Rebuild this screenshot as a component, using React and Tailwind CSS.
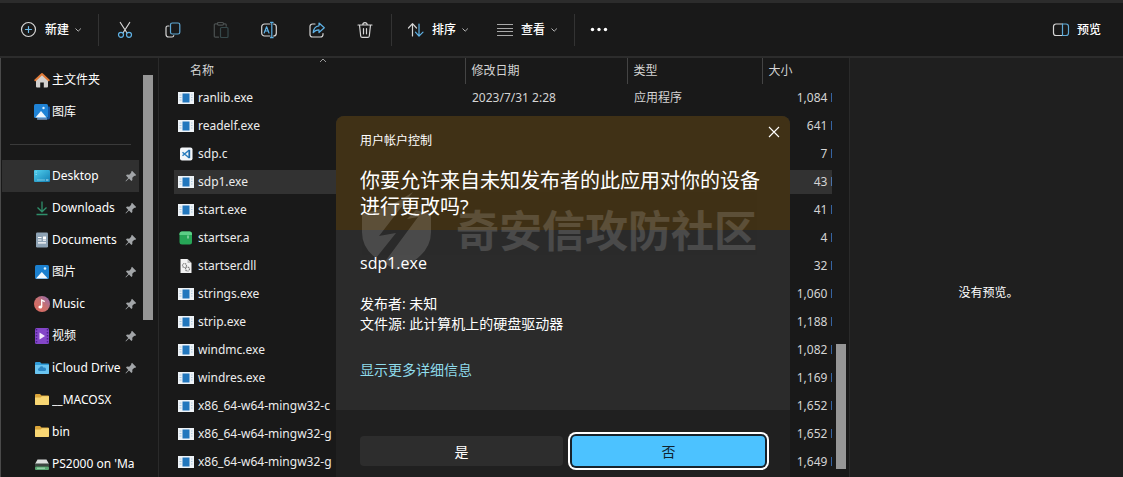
import React from 'react';

const QUICK_LINKS = [
  { label: '主文件夹', icon: HomeIcon },
  { label: '图库', icon: GalleryIcon },
];

const PLACES = [
  { label: 'Desktop', icon: DesktopIcon, pinned: true, active: true },
  { label: 'Downloads', icon: DownloadIcon, pinned: true },
  { label: 'Documents', icon: DocumentIcon, pinned: true },
  { label: '图片', icon: PictureIcon, pinned: true },
  { label: 'Music', icon: MusicIcon, pinned: true },
  { label: '视频', icon: VideoIcon, pinned: true },
  { label: 'iCloud Drive', icon: CloudFolderIcon, pinned: true },
  { label: '__MACOSX', icon: FolderIcon },
  { label: 'bin', icon: FolderIcon },
  { label: "PS2000 on 'Ma", icon: DriveIcon },
];

const FILES = [
  { name: 'ranlib.exe', date: '2023/7/31 2:28', type: '应用程序', size: '1,084' },
  { name: 'readelf.exe', size: '641' },
  { name: 'sdp.c', icon: CodeFileIcon, size: '7' },
  { name: 'sdp1.exe', size: '43', selected: true },
  { name: 'start.exe', size: '41' },
  { name: 'startser.a', icon: ArchiveFileIcon, size: '4' },
  { name: 'startser.dll', icon: DllFileIcon, size: '32' },
  { name: 'strings.exe', size: '1,060' },
  { name: 'strip.exe', size: '1,188' },
  { name: 'windmc.exe', size: '1,082' },
  { name: 'windres.exe', size: '1,169' },
  { name: 'x86_64-w64-mingw32-c', size: '1,652' },
  { name: 'x86_64-w64-mingw32-g', size: '1,652' },
  { name: 'x86_64-w64-mingw32-g', size: '1,649' },
];

/* ---------- toolbar icons ---------- */

function ToolIcon({ children }) {
  return (
    <svg viewBox="0 0 18 18" className="w-[18px] h-[18px] shrink-0" fill="none" stroke="#d6d6d6" strokeWidth="1.2" strokeLinecap="round" strokeLinejoin="round" aria-hidden="true">
      {children}
    </svg>
  );
}

function NewIcon() {
  return (
    <ToolIcon>
      <circle cx="8.500" cy="8.500" r="7" />
      <path d="M8.500 5.500v6M5.500 8.500h6" stroke="#6fb9e6" />
    </ToolIcon>
  );
}

function CutIcon() {
  return (
    <ToolIcon>
      <path d="M4.3 1.5l6.6 10.3M13.7 1.5L7.1 11.8" />
      <circle cx="5" cy="13.8" r="2.5" stroke="#5fb2e6" />
      <circle cx="13" cy="13.8" r="2.5" stroke="#5fb2e6" />
    </ToolIcon>
  );
}

function CopyIcon() {
  return (
    <ToolIcon>
      <path d="M5 5H3.8A1.8 1.8 0 0 0 2 6.800v6.400A2.800 2.800 0 0 0 4.800 16H8a1.800 1.800 0 0 0 1.800-1.500" />
      <rect x="6.500" y="2" width="9.300" height="11" rx="1.800" stroke="#5fa9d6" />
    </ToolIcon>
  );
}

function PasteIcon() {
  return (
    <ToolIcon>
      <g stroke="#4b5050">
        <path d="M5.500 2.800H3.300a1 1 0 0 0-1 1v11.400a1 1 0 0 0 1 1h3.200M11.500 2.800h1.700a1 1 0 0 1 1 1v1.400" />
        <rect x="5.500" y="1.500" width="6" height="2.600" rx="1" />
        <rect x="8.500" y="6.500" width="7.500" height="10" rx="1" stroke="#36494b" />
      </g>
    </ToolIcon>
  );
}

function RenameIcon() {
  return (
    <ToolIcon>
      <path d="M10 3H4.500A2.800 2.800 0 0 0 1.700 5.800v6.400A2.800 2.800 0 0 0 4.500 15H10M13.600 3a2.800 2.800 0 0 1 2.700 2.800v6.400a2.800 2.800 0 0 1-2.700 2.800" />
      <path d="M10.500 1.300h2.600M10.500 16.700h2.600M11.800 1.300v15.400M4.200 12l2.400-6.300L9 12M5 10h3.200" stroke="#5fb2e6" />
    </ToolIcon>
  );
}

function ShareIcon() {
  return (
    <ToolIcon>
      <path d="M7 3H4.500A2.500 2.500 0 0 0 2 5.500v8A2.500 2.500 0 0 0 4.500 16h8a2.500 2.500 0 0 0 2.500-2.500v-1" />
      <path d="M11 2l5.300 4.800L11 11.500V8.800c-2.700 0-4.400.9-5.800 2.900.3-3.700 2.300-6.500 5.800-6.900z" stroke="#5fb2e6" />
    </ToolIcon>
  );
}

function TrashIcon() {
  return (
    <ToolIcon>
      <path d="M2 4h14M6.800 3.800a2.200 2.200 0 0 1 4.400 0M3.500 4l1.200 11a1.600 1.600 0 0 0 1.600 1.400h5.400a1.600 1.600 0 0 0 1.600-1.400l1.200-11M7.500 7.500v5.300M10.500 7.500v5.300" />
    </ToolIcon>
  );
}

function SortIcon() {
  return (
    <ToolIcon>
      <path d="M5.500 15V3M1.500 7l4-4.300L9.500 7" />
      <path d="M12 3v12M8.500 11.200l3.500 4 4-4" stroke="#5fb2e6" />
    </ToolIcon>
  );
}

function ViewIcon() {
  return (
    <ToolIcon>
      <path d="M1 3.500h16M1 7.500h16M1 10.500h16M1 14.500h16" stroke="#a8a8a8" strokeLinecap="butt" />
    </ToolIcon>
  );
}

function PreviewIcon() {
  return (
    <ToolIcon>
      <path d="M10.500 3H4a2.500 2.500 0 0 0-2.500 2.500v6.500A2.500 2.500 0 0 0 4 14.500h6.500" />
      <path d="M10.500 3H14a2.500 2.500 0 0 1 2.500 2.500v6.500a2.500 2.500 0 0 1-2.500 2.500h-3.500z" stroke="#5fa9d6" />
    </ToolIcon>
  );
}

function Chevron() {
  return (
    <svg viewBox="0 0 8 8" className="w-2 h-2 shrink-0" fill="none" stroke="#b5b5b5" aria-hidden="true">
      <path d="M.5 2.500l2.700 2.700 2.700-2.700" />
    </svg>
  );
}

/* ---------- sidebar icons ---------- */

function PlaceIcon({ children }) {
  return (
    <svg viewBox="0 0 16 16" className="w-4 h-4 shrink-0" aria-hidden="true">
      {children}
    </svg>
  );
}

function HomeIcon() {
  return (
    <PlaceIcon>
      <path d="M2 7.500L8 2l6 5.500V14.500a1 1 0 0 1-1 1H9.800V10.500H6.200v5H3a1 1 0 0 1-1-1z" fill="#d3d0ce" />
      <path d="M1.300 8.300L8 2l6.700 6.300" fill="none" stroke="#e07b39" strokeWidth="2" strokeLinecap="round" strokeLinejoin="round" />
    </PlaceIcon>
  );
}

function GalleryIcon() {
  return (
    <PlaceIcon>
      <path d="M14 2.500h1.200a.8.8 0 0 1 .8.800v10.200a2 2 0 0 1-2 2H3.500V14H14z" fill="#1656a3" />
      <rect width="14" height="14" rx="1.500" fill="#1f83d6" />
      <path d="M1.500 13.500L7 7l5.500 6.500z" fill="#eef6fd" />
      <circle cx="9.500" cy="4" r="1.200" fill="#d7ecfb" />
      <path d="M3 15h10" stroke="#9fb9d0" />
    </PlaceIcon>
  );
}

function DesktopIcon() {
  return (
    <PlaceIcon>
      <defs>
        <linearGradient id="desktop" x1="0" x2="1" y1="0" y2="1">
          <stop stopColor="#52d0ee" />
          <stop offset="1" stopColor="#127fb4" />
        </linearGradient>
      </defs>
      <rect y="2" width="16" height="12" rx="1" fill="url(#desktop)" />
      <path d="M1.500 4h1.500M1.500 6.500h1.500M3 12h8" stroke="#b7effb" strokeWidth=".8" opacity=".7" />
      <path d="M12 12h2.500" stroke="#e3f7fd" strokeWidth=".8" />
    </PlaceIcon>
  );
}

function DownloadIcon() {
  return (
    <PlaceIcon>
      <path d="M8 1.500v10M3.500 7.500L8 11.800l4.500-4.300M2.500 14.500h11" fill="none" stroke="#2f8f6b" strokeWidth="1.300" />
    </PlaceIcon>
  );
}

function DocumentIcon() {
  return (
    <PlaceIcon>
      <rect x="2" y=".5" width="12" height="15" rx="1.200" fill="#8ea3b5" />
      <path d="M4 5.500h3.500M4 8h3.500M4 10.800h8M9 8.200h3" stroke="#fff" strokeWidth="1.200" />
      <rect x="9" y="4.500" width="3" height="2.500" fill="#fff" />
    </PlaceIcon>
  );
}

function PictureIcon() {
  return (
    <PlaceIcon>
      <rect x="1" y="1" width="14" height="14" rx="1.500" fill="#1b80cf" />
      <path d="M2 14.500L7.800 8l6 6.500z" fill="#f1f8fe" />
      <circle cx="11" cy="4.500" r="1.300" fill="#d9eefc" />
    </PlaceIcon>
  );
}

function MusicIcon() {
  return (
    <PlaceIcon>
      <defs>
        <linearGradient id="music" x1="0" x2="1" y1="1" y2="0">
          <stop stopColor="#e2685d" />
          <stop offset=".5" stopColor="#c9706e" />
          <stop offset="1" stopColor="#8f6bb5" />
        </linearGradient>
      </defs>
      <circle cx="8" cy="8" r="8" fill="url(#music)" />
      <ellipse cx="6.300" cy="11" rx="1.900" ry="1.600" fill="#fff" />
      <path d="M7.700 11V4l3 1.600" fill="none" stroke="#fff" strokeWidth="1.300" />
    </PlaceIcon>
  );
}

function VideoIcon() {
  return (
    <PlaceIcon>
      <rect x="1" width="14" height="16" rx="1.500" fill="#8446c8" />
      <path d="M2.500 1v14M13.500 1v14" stroke="#4d2290" strokeWidth="1.500" strokeDasharray="1.500 1.500" />
      <path d="M5.500 4.500L11 8l-5.500 3.500z" fill="#f4e9fd" />
    </PlaceIcon>
  );
}

function CloudFolderIcon() {
  return (
    <PlaceIcon>
      <path d="M1 3a1 1 0 0 1 1-1h4l1.500 1.500H14a1 1 0 0 1 1 1V13a1 1 0 0 1-1 1H2a1 1 0 0 1-1-1z" fill="#2f9bd8" />
      <path d="M1 5h14v8a1 1 0 0 1-1 1H2a1 1 0 0 1-1-1z" fill="#6ac4f0" />
      <path d="M5 11a1.600 1.600 0 0 1 .3-3.100 2.300 2.300 0 0 1 4.300-.2A1.700 1.700 0 0 1 11 11z" fill="#2c86c4" />
    </PlaceIcon>
  );
}

function FolderIcon() {
  return (
    <PlaceIcon>
      <path d="M1 3a1 1 0 0 1 1-1h4l1.500 1.500H14a1 1 0 0 1 1 1V12a1 1 0 0 1-1 1H2a1 1 0 0 1-1-1z" fill="#dba53a" />
      <path d="M1 5.500h5.500L8 4.200h7V12a1 1 0 0 1-1 1H2a1 1 0 0 1-1-1z" fill="#f8d673" />
    </PlaceIcon>
  );
}

function DriveIcon() {
  return (
    <PlaceIcon>
      <path d="M3.500 3.500h9L15 8H1z" fill="#dcdedd" />
      <rect x="1" y="7.500" width="14" height="3" fill="#3c4641" />
      <rect x="1" y="10.500" width="14" height="3.500" rx="1" fill="#5aa873" />
      <path d="M3 12.200h8" stroke="#c5ead0" strokeWidth=".8" />
    </PlaceIcon>
  );
}

function PinIcon() {
  return (
    <svg viewBox="0 0 12 12" className="w-3 h-3 shrink-0" aria-hidden="true">
      <path d="M7 .8l4.200 4.200-1.200.9-.7-.1-2 2 .1 2.200-1 1L4 8.600.9 11.400l-.4-.4L3.300 8 1 5.600l1-1 2.200.1 2-2-.1-.8z" fill="#a2a5a8" />
    </svg>
  );
}

/* ---------- file icons ---------- */

function ExeFileIcon() {
  return (
    <PlaceIcon>
      <rect y="2" width="16" height="12" fill="#eef3f7" />
      <rect x="4.500" y="3.500" width="7" height="9" fill="#2277bd" />
      <path d="M1.500 5h2M1.500 7.500h2M1.500 10h2M13 5h1.500M13 7.500h1.500M13 10h1.500" stroke="#9cc0da" strokeWidth=".8" />
    </PlaceIcon>
  );
}

function CodeFileIcon() {
  return (
    <PlaceIcon>
      <rect x="2" y="1.500" width="12.500" height="13" rx="2" fill="#f3f6f9" />
      <path d="M11 4.200L4.500 9.800M11 11.800L4.500 6.200" fill="none" stroke="#2b7fc0" strokeWidth="1.500" />
      <path d="M11.300 3.800v8.400" stroke="#1f6cab" strokeWidth="1.800" />
    </PlaceIcon>
  );
}

function ArchiveFileIcon() {
  return (
    <PlaceIcon>
      <rect x="1.500" y="1.500" width="12.500" height="13" rx="2.500" fill="#27a657" />
      <path d="M1.500 5V4A2.500 2.500 0 0 1 4 1.500h7.500A2.500 2.500 0 0 1 14 4v1z" fill="#5ccf86" />
      <path d="M10 5.500v3" stroke="#c8f3d6" />
    </PlaceIcon>
  );
}

function DllFileIcon() {
  return (
    <PlaceIcon>
      <path d="M2.500 1h7L13.500 5v10h-11z" fill="#f2f2f2" />
      <path d="M9.500 1v4h4z" fill="#b9b9b9" />
      <circle cx="6.500" cy="7.500" r="2" fill="none" stroke="#7d7d7d" strokeWidth="1.200" strokeDasharray="1.200 .6" />
      <circle cx="9.500" cy="11" r="2" fill="none" stroke="#7d7d7d" strokeWidth="1.200" strokeDasharray="1.200 .6" />
    </PlaceIcon>
  );
}

/* ---------- sections ---------- */

function IconButton({ label, children, disabled }) {
  return (
    <button type="button" aria-label={label} disabled={disabled} className="flex w-12 h-10 items-center justify-center">
      {children}
    </button>
  );
}

function MenuButton({ label, icon: Icon }) {
  return (
    <button type="button" className="flex items-center gap-[7px]">
      <Icon />
      <span className="flex items-center gap-1.5">{label} <Chevron /></span>
    </button>
  );
}

function Divider() {
  return <div className="h-8 w-px bg-[#333]" />;
}

function Toolbar() {
  return (
    <header className="flex h-[58px] shrink-0 items-center border-t-3 border-b-2 border-[#2c2c2c] pr-[22px] pl-5 text-[12px] font-medium text-white">
      <div className="flex items-center gap-[15px]">
        <MenuButton label="新建" icon={NewIcon} />
        <Divider />
      </div>
      <div className="flex items-center px-0.5">
        <IconButton label="剪切"><CutIcon /></IconButton>
        <IconButton label="复制"><CopyIcon /></IconButton>
        <IconButton label="粘贴" disabled><PasteIcon /></IconButton>
        <IconButton label="重命名"><RenameIcon /></IconButton>
        <IconButton label="共享"><ShareIcon /></IconButton>
        <IconButton label="删除"><TrashIcon /></IconButton>
      </div>
      <div className="flex items-center gap-[15px]">
        <Divider />
        <div className="flex items-center gap-[26px]">
          <MenuButton label="排序" icon={SortIcon} />
          <MenuButton label="查看" icon={ViewIcon} />
        </div>
        <Divider />
        <button type="button" aria-label="更多">
          <svg viewBox="0 0 18 18" className="w-[18px] h-[18px]" fill="#fff" aria-hidden="true">
            <circle cx="2.500" cy="8.500" r="1.700" />
            <circle cx="9" cy="8.500" r="1.700" />
            <circle cx="15.500" cy="8.500" r="1.700" />
          </svg>
        </button>
      </div>
      <button type="button" className="ml-auto flex items-center gap-[7px]">
        <PreviewIcon />
        预览
      </button>
    </header>
  );
}

function Place({ label, icon: Icon, pinned, active }) {
  return (
    <li>
      <a
        href="#"
        className={`flex h-8 items-center gap-0.5 pr-0.5 pl-8 ${active ? 'bg-[#303030]' : ''}`}
      >
        <Icon />
        <span className="min-w-0 flex-1 overflow-hidden whitespace-nowrap">{label}</span>
        {pinned && <PinIcon />}
      </a>
    </li>
  );
}

function Sidebar() {
  return (
    <nav className="flex w-[158px] shrink-0 border-l border-[#4a4a4a] pt-1.5 pl-px font-['Noto_Sans','Noto_Sans_CJK_SC',sans-serif] text-[12px]">
      <div className="w-[137px]">
        <ul>
          {QUICK_LINKS.map((p) => <Place key={p.label} {...p} />)}
        </ul>
        <div className="flex h-8 items-center pr-2 pl-2">
          <hr className="flex-1 border-[#3a3a3a]" />
        </div>
        <ul>
          {PLACES.map((p) => <Place key={p.label} {...p} />)}
        </ul>
      </div>
      <div className="mt-[11px] ml-1 h-[245px] w-2.5 bg-[#969696]" />
    </nav>
  );
}

function Cell({ selected, className = '', children }) {
  return (
    <td className="p-0">
      <div className={`my-0.5 flex h-6 items-center overflow-hidden whitespace-nowrap ${selected ? 'bg-[#323232]' : ''} ${className}`}>
        {children}
      </div>
    </td>
  );
}

function FileRow({ name, date, type, size, icon: Icon = ExeFileIcon, selected }) {
  return (
    <tr>
      <Cell selected={selected} className="gap-1 pl-1 text-[#ececec]"><Icon />{name}</Cell>
      <Cell selected={selected} className="pl-[7px]">{date}</Cell>
      <Cell selected={selected} className="pl-[7px]">{type}</Cell>
      <Cell selected={selected} className="justify-end">{size} K</Cell>
    </tr>
  );
}

function FileList() {
  const th = 'relative h-[26px] border-l border-[#444] pl-1.5 text-left font-normal';
  return (
    <main className="flex min-w-0 flex-1 border-x border-[#2a2a2a] pl-[15px] font-['Noto_Sans','Noto_Sans_CJK_SC',sans-serif] text-[12px] text-[#d4d4d4]">
      <div className="min-w-0 flex-1 overflow-hidden">
        {/* the size column runs past the edge of the pane */}
        <table className="w-[calc(100%+6px)] table-fixed border-collapse">
          <colgroup>
            <col />
            <col className="w-[162px]" />
            <col className="w-[135px]" />
            <col className="w-[76px]" />
          </colgroup>
          <thead>
            <tr>
              <th className="relative h-[26px] pl-4 text-left font-normal">
                名称
                <svg viewBox="0 0 8 5" className="absolute top-0 left-1/2 h-[5px] w-2" fill="none" stroke="#999" aria-hidden="true">
                  <path d="M1 4l3-3 3 3" />
                </svg>
              </th>
              <th className={th}>修改日期</th>
              <th className={th}>类型</th>
              <th className={th}>大小</th>
            </tr>
          </thead>
          <tbody>
            {FILES.map((f, i) => <FileRow key={i} {...f} />)}
          </tbody>
        </table>
      </div>
      <div className="mr-[3px] ml-1 mb-2 h-[125px] w-2.5 self-end bg-[#969696]" />
    </main>
  );
}

function Watermark() {
  return (
    <div className="pointer-events-none absolute top-[76px] left-[26px] flex items-center gap-6 text-white opacity-15">
      <svg viewBox="0 0 70 78" className="h-[78px] w-[70px]" fill="currentColor" aria-hidden="true">
        <path d="M51 0L17 44l17-3-20 25Q0 56 0 40V21Q26 18 51 0z" />
        <path d="M54 18Q61 21 69 21V40Q69 64 35 78 28 75 22 71L56 25 45 27z" />
      </svg>
      <span className="text-[43px] leading-[48px] font-bold whitespace-nowrap">奇安信攻防社区</span>
    </div>
  );
}

function UacDialog() {
  return (
    <div className="pointer-events-none absolute inset-0 flex items-start justify-center overflow-hidden pt-[116px] pl-[3px]">
      <div role="dialog" aria-labelledby="uac-title" className="pointer-events-auto relative w-[454px] overflow-hidden rounded-lg bg-[#2b2b2b] text-white">
        <div className="h-[114px] bg-[#403116] px-6 pt-4">
          <div className="text-[12px] leading-[18px]">用户帐户控制</div>
          <h1 id="uac-title" className="mt-[18px] text-[20px] leading-[26px]">你要允许来自未知发布者的此应用对你的设备进行更改吗?</h1>
          <button type="button" aria-label="关闭" className="absolute top-2 right-2 p-0.5">
            <svg viewBox="0 0 12 12" className="h-3 w-3" fill="none" stroke="#fff" strokeWidth="1.100" aria-hidden="true">
              <path d="M1 1l10 10M11 1L1 11" />
            </svg>
          </button>
        </div>
        <div className="h-[180px] px-6 pt-[22px]">
          <div className="text-[16px] leading-[22px]">sdp1.exe</div>
          <div className="mt-5 text-[14px] leading-[20px]">
            <p>发布者: 未知</p>
            <p>文件源: 此计算机上的硬盘驱动器</p>
          </div>
          <a href="#" className="mt-[26px] block text-[14px] leading-[20px] text-[#8fdcec]">显示更多详细信息</a>
        </div>
        <div className="grid grid-cols-[203fr_193fr] gap-[9px] bg-[#202020] pt-[26px] pr-[25px] pb-6 pl-6 text-[14px]">
          <button type="button" className="h-[30px] rounded-sm bg-[#2d2d2d]">是</button>
          <button type="button" className="h-[30px] rounded-sm bg-[#4cc2ff] text-[#10222e] ring-2 ring-white ring-offset-2 ring-offset-[#16222b]">否</button>
        </div>
        <Watermark />
      </div>
    </div>
  );
}

export default function App() {
  return (
    <div className="relative flex h-screen flex-col overflow-hidden bg-[#191919] font-['Open_Sans','Noto_Sans_CJK_SC',sans-serif] text-white">
      <Toolbar />
      <div className="flex min-h-0 flex-1">
        <Sidebar />
        <FileList />
        <aside className="flex w-[273px] shrink-0 items-center justify-center bg-[#1f1f1f] pt-[50px] pl-1 text-[12px]">
          <p>没有预览。</p>
        </aside>
      </div>
      <UacDialog />
    </div>
  );
}
